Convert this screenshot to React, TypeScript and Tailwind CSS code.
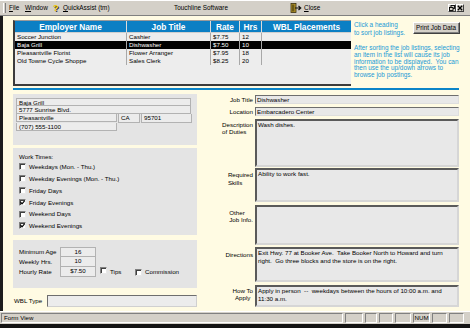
import React from 'react';

type Job = { emp: string; job: string; rate: string; hrs: string; sel?: boolean };

const jobs: Job[] = [
  { emp: 'Soccer Junction', job: 'Cashier', rate: '$7.75', hrs: '12' },
  { emp: 'Baja Grill', job: 'Dishwasher', rate: '$7.50', hrs: '10', sel: true },
  { emp: 'Pleasantville Florist', job: 'Flower Arranger', rate: '$7.95', hrs: '18' },
  { emp: 'Old Towne Cycle Shoppe', job: 'Sales Clerk', rate: '$8.25', hrs: '20' },
];

const workTimes = [
  { label: 'Weekdays (Mon. - Thu.)', on: false },
  { label: 'Weekday Evenings (Mon. - Thu.)', on: false },
  { label: 'Friday Days', on: false },
  { label: 'Friday Evenings', on: true },
  { label: 'Weekend Days', on: false },
  { label: 'Weekend Evenings', on: true },
];

function Check({ on }: { on?: boolean }) {
  return (
    <span className="inline-flex w-[7px] h-[7px] shrink-0 items-center justify-center bg-white border border-t-[#808080] border-l-[#808080] border-r-[#e8e8e8] border-b-[#e8e8e8] shadow-[inset_1px_1px_0_#404040]">
      {on && (
        <svg width="5" height="5" viewBox="0 0 5 5">
          <path d="M0.6 2.2 L2 3.8 L4.6 0.8" fill="none" stroke="#000" strokeWidth="1.2" />
        </svg>
      )}
    </span>
  );
}

function DoorIcon() {
  return (
    <svg width="12" height="10" viewBox="0 0 12 10" className="shrink-0">
      <rect x="1" y="0.5" width="5" height="9" fill="#b8982a" stroke="#3a3010" strokeWidth="0.8" />
      <rect x="2" y="1.5" width="2.4" height="7" fill="#6b5a18" />
      <path d="M5 5 H10.5 M8.5 3 L10.8 5 L8.5 7" fill="none" stroke="#111" strokeWidth="1.1" />
    </svg>
  );
}

function List() {
  const cols = ['w-[112px]', 'w-[84px]', 'w-[29px]', 'w-[22px]'];
  return (
    <div className="w-[338px] h-[66px] shrink-0 flex flex-col bg-[#ededed] border-t border-t-[#9a9a9a] border-l-2 border-l-[#3c3c3c] border-b-2 border-b-[#3c3c3c]">
      <div className="h-[12px] flex bg-[#0b7fc4] text-white font-bold text-[8.3px] leading-[12px] border-b border-b-[#cfcfcf]">
        <div className={`${cols[0]} text-center border-r border-r-[#dcdcdc]`}>Employer Name</div>
        <div className={`${cols[1]} text-center border-r border-r-[#dcdcdc]`}>Job Title</div>
        <div className={`${cols[2]} text-center border-r border-r-[#dcdcdc]`}>Rate</div>
        <div className={`${cols[3]} text-center border-r border-r-[#dcdcdc]`}>Hrs</div>
        <div className="flex-1 text-center">WBL Placements</div>
      </div>
      {jobs.map((j) => (
        <div
          key={j.emp}
          className={`h-[8px] flex text-[6.2px] leading-[8px] ${j.sel ? 'bg-black text-white' : 'text-black'}`}
        >
          <div className={`${cols[0]} pl-[2px] border-r border-r-[#a8a8a8] whitespace-nowrap`}>{j.emp}</div>
          <div className={`${cols[1]} pl-[2px] border-r border-r-[#a8a8a8] whitespace-nowrap`}>{j.job}</div>
          <div className={`${cols[2]} pl-[2px] border-r border-r-[#a8a8a8]`}>{j.rate}</div>
          <div className={`${cols[3]} pl-[2px] border-r border-r-[#a8a8a8]`}>{j.hrs}</div>
          <div className="flex-1" />
        </div>
      ))}
    </div>
  );
}

const box = 'bg-[#ececec] border border-[#b2b2b2] pl-[2px] text-[6.2px] leading-[7px] whitespace-nowrap';
const one = 'bg-[#e8e8e8] border border-t-[#6e6e6e] border-l-[#6e6e6e] border-r-[#dedede] border-b-[#dedede] pl-[1px] text-[6.2px] leading-[7px] whitespace-nowrap';
const multi = 'bg-[#e8e8e8] border-2 border-t-[#5a5a5a] border-l-[#5a5a5a] border-r-[#d6d6d6] border-b-[#d6d6d6] pl-[1px] text-[6.2px] leading-[7.6px] whitespace-pre';

export default function App() {
  return (
    <div className="w-[470px] h-[328px] flex flex-col overflow-hidden bg-[#fffbe3] text-black font-['Liberation_Sans',Arial,sans-serif]">
      {/* menu bar */}
      <div className="h-[16px] shrink-0 flex items-center bg-[#d4d0c8] border-t border-t-white border-b border-b-[#808080] text-[6.4px] leading-none whitespace-nowrap">
        <span className="ml-[3px] w-[3px] h-[10px] border-l border-l-white border-r border-r-[#808080]" />
        <span className="ml-[3px] w-[16px]"><u>F</u>ile</span>
        <span className="w-[28px]"><u>W</u>indow</span>
        <span className="w-[10px] font-bold text-[9px] text-[#f0c800] [text-shadow:1px_1px_0_#303030]">?</span>
        <span className="w-[111px]"><u>Q</u>uickAssist (tm)</span>
        <span className="w-[116px]">Touchline Software</span>
        <DoorIcon />
        <span className="ml-[2px]"><u>C</u>lose</span>
        <span className="flex-1" />
        <span className="w-[8px] h-[8px] flex items-center justify-center bg-[#d4d0c8] border border-t-white border-l-white border-r-[#404040] border-b-[#404040]">
          <svg width="6" height="6" viewBox="0 0 6 6">
            <rect x="2" y="0.5" width="3.5" height="3" fill="none" stroke="#000" strokeWidth="0.9" />
            <rect x="0.5" y="2.5" width="3.5" height="3" fill="#d4d0c8" stroke="#000" strokeWidth="0.9" />
          </svg>
        </span>
        <span className="w-[8px] h-[8px] flex items-center justify-center bg-[#d4d0c8] border border-t-white border-l-white border-r-[#404040] border-b-[#404040] mr-[6px]">
          <svg width="6" height="6" viewBox="0 0 6 6">
            <path d="M0.8 0.8 L5.2 5.2 M5.2 0.8 L0.8 5.2" stroke="#000" strokeWidth="1.3" />
          </svg>
        </span>
      </div>

      {/* form area */}
      <div className="flex-1 flex flex-col border-l-[3px] border-l-[#1c1c1c] pl-[10px] pr-[11px]">
        <div className="mt-[4px] flex h-[66px]">
          <List />
          <div className="ml-[3px] flex-1 flex flex-col text-[#1a9ad6] text-[6.4px] whitespace-nowrap">
            <div className="flex justify-between">
              <div className="pt-[1px] leading-[7.5px]">
                Click a heading
                <br />
                to sort job listings.
              </div>
              <button className="mt-[2px] w-[47px] h-[12px] bg-[#d4d0c8] text-black text-[6.3px] leading-none border border-t-white border-l-white border-r-[#404040] border-b-[#404040] shadow-[inset_-1px_-1px_0_#808080]">
                Print Job Data
              </button>
            </div>
            <div className="mt-[9px] leading-[6.8px]">
              After sorting the job listings, selecting
              <br />
              an item in the list will cause its job
              <br />
              information to be displayed.&nbsp; You can
              <br />
              then use the up/down arrows to
              <br />
              browse job postings.
            </div>
          </div>
        </div>

        <div className="mt-[2px] h-[2px] bg-[#0b84c8]" />

        <div className="mt-[4px] flex">
          {/* left column */}
          <div className="w-[184px] shrink-0 flex flex-col">
            <div className="h-[51px] bg-[#e4e4e4] pt-[4px] pl-[3px]">
              <div className={`${box} w-[175px] h-[8px]`}>Baja Grill</div>
              <div className={`${box} w-[175px] h-[8px] border-t-0`}>5777 Sunrise Blvd.</div>
              <div className="flex">
                <div className={`${box} w-[101px] h-[8px] border-t-0`}>Pleasantville</div>
                <div className={`${box} ml-[1px] w-[22px] h-[9px] border-t-0`}>CA</div>
                <div className={`${box} ml-[1px] w-[51px] h-[9px] border-t-0`}>95701</div>
              </div>
              <div className={`${box} w-[101px] h-[8px] border-t-0`}>(707) 555-1100</div>
            </div>

            <div className="mt-[3px] h-[87px] bg-[#e4e4e4] pt-[5px] pl-[6px] text-[6.2px]">
              <div className="h-[8px] leading-[8px]">Work Times:</div>
              {workTimes.map((w) => (
                <div key={w.label} className="h-[11.8px] flex items-center">
                  <Check on={w.on} />
                  <span className="ml-[3px] whitespace-nowrap">{w.label}</span>
                </div>
              ))}
            </div>

            <div className="mt-[5px] h-[48px] bg-[#e4e4e4] pt-[7px] pl-[6px] text-[6.2px]">
              {[
                { l: 'Minimum Age', v: '16' },
                { l: 'Weekly Hrs.', v: '10' },
                { l: 'Hourly Rate', v: '$7.50' },
              ].map((r, i) => (
                <div key={r.l} className="h-[10px] flex items-center whitespace-nowrap">
                  <span className="w-[41px]">{r.l}</span>
                  <span
                    className={`w-[36px] h-[10px] bg-[#ececec] border border-[#b2b2b2] text-center leading-[8px] ${i > 0 ? 'border-t-0' : ''}`}
                  >
                    {r.v}
                  </span>
                  {i === 2 && (
                    <>
                      <span className="ml-[4px]"><Check /></span>
                      <span className="ml-[3px] w-[25px]">Tips</span>
                      <Check />
                      <span className="ml-[3px]">Commission</span>
                    </>
                  )}
                </div>
              ))}
            </div>

            <div className="mt-[7px] h-[12px] flex items-center text-[6.2px]">
              <span className="ml-[1px] w-[33px] whitespace-nowrap">WBL Type</span>
              <span className="flex-1 h-[12px] bg-[#ececec] border border-t-[#6e6e6e] border-l-[#6e6e6e] border-r-[#d0d0d0] border-b-[#d0d0d0]" />
            </div>
          </div>

          {/* right column */}
          <div className="ml-[24px] flex-1 flex flex-col text-[6.2px]">
            <div className="mt-[1px] h-[9px] flex items-center">
              <div className="w-[34px] pr-[2px] text-right whitespace-nowrap">Job Title</div>
              <div className={`${one} flex-1 h-[9px]`}>Dishwasher</div>
            </div>
            <div className="mt-[3px] h-[9px] flex items-center">
              <div className="w-[34px] pr-[2px] text-right whitespace-nowrap">Location</div>
              <div className={`${one} flex-1 h-[9px]`}>Embarcadero Center</div>
            </div>
            <div className="mt-[3px] h-[48px] flex items-start">
              <div className="w-[34px] pr-[2px] pt-[2px] flex justify-end leading-[7px] whitespace-nowrap">
                <div className="text-left">Description<br />of Duties</div>
              </div>
              <div className={`${multi} flex-1 h-[48px]`}>Wash dishes.</div>
            </div>
            <div className="mt-[1px] h-[34px] flex items-start">
              <div className="w-[34px] pr-[2px] pt-[3px] flex justify-end leading-[7.5px] whitespace-nowrap">
                <div className="text-left">Required<br />Skills</div>
              </div>
              <div className={`${multi} flex-1 h-[34px]`}>Ability to work fast.</div>
            </div>
            <div className="mt-[3px] h-[40px] flex items-start">
              <div className="w-[34px] pr-[2px] pt-[4px] flex justify-end leading-[7px] whitespace-nowrap">
                <div className="text-left">Other<br />Job Info.</div>
              </div>
              <div className={`${multi} flex-1 h-[40px]`} />
            </div>
            <div className="mt-[2px] h-[35px] flex items-start">
              <div className="w-[34px] pr-[2px] pt-[3px] text-right whitespace-nowrap">Directions</div>
              <div className={`${multi} flex-1 h-[35px]`}>
                {'Exit Hwy. 77 at Booker Ave.  Take Booker North to Howard and turn\nright.  Go three blocks and the store is on the right.'}
              </div>
            </div>
            <div className="mt-[3px] h-[22px] flex items-start">
              <div className="w-[34px] pr-[2px] pt-[2px] flex justify-end leading-[7px] whitespace-nowrap">
                <div className="text-center">How To<br />Apply</div>
              </div>
              <div className={`${multi} flex-1 h-[22px]`}>
                {'Apply in person  --  weekdays between the hours of 10:00 a.m. and\n11:30 a.m.'}
              </div>
            </div>
          </div>
        </div>
      </div>

      {/* status bar */}
      <div className="h-[13px] shrink-0 flex gap-[2px] px-[1px] py-[1px] bg-[#d4d0c8] border-t border-t-white text-[6.2px] leading-none">
        <div className="w-[342px] flex items-center pl-[2px] border border-t-[#808080] border-l-[#808080] border-r-white border-b-white">
          Form View
        </div>
        {['w-[18px]', 'w-[12px]', 'w-[14px]', 'w-[16px]', 'w-[17px]', 'w-[15px]', 'w-[15px]'].map((w, i) => (
          <div
            key={i}
            className={`${w} flex items-center justify-center border border-t-[#808080] border-l-[#808080] border-r-white border-b-white`}
          >
            {i === 4 ? 'NUM' : ''}
          </div>
        ))}
      </div>
      <div className="h-[4px] shrink-0 bg-[#141414]" />
    </div>
  );
}
